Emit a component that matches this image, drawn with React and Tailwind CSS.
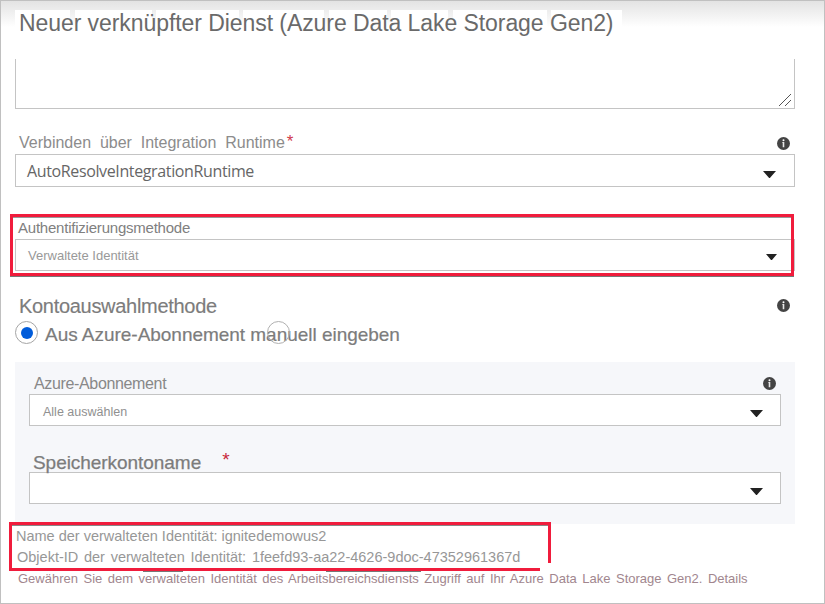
function InfoIcon() {
  return (
    <svg className="block h-[13px] w-[13px] shrink-0" viewBox="0 0 13 13">
      <circle cx="6.5" cy="6.5" r="6.5" fill="#444" />
      <circle cx="6.5" cy="3.2" r="1" fill="#fff" />
      <path d="M5.2 5h2.1v5.2H5.7V5.7h-.5Z" fill="#e8e8e8" />
    </svg>
  );
}

function Caret({ className = "h-[7px] w-[13px]" }) {
  return (
    <svg className={`block shrink-0 ${className}`} viewBox="0 0 13 7" preserveAspectRatio="none">
      <path d="M0 0h13L7.3 6.6a1 1 0 0 1-1.6 0Z" fill="#222" />
    </svg>
  );
}

function Select({ children, className = "", caret }) {
  return (
    <div className={`flex justify-between border border-[#c4c4c4] bg-white ${className}`}>
      <div className="whitespace-nowrap">{children}</div>
      {caret}
    </div>
  );
}

function HeaderPatches() {
  return (
    <div className="absolute top-[9px] left-[14px] flex h-5">
      <div className="mr-[5px] w-[55px] bg-white" />
      <div className="mr-1 w-[77px] bg-white" />
      <div className="mr-1 w-[83px] bg-white" />
      <div className="mr-[5px] w-[81px] bg-white" />
      <div className="mr-1 w-[58px] bg-white" />
      <div className="mr-[5px] w-[57px] bg-white" />
      <div className="mr-1 w-[94px] bg-white" />
      <div className="w-[71px] bg-white" />
    </div>
  );
}

export default function App() {
  return (
    <div className="flex h-[604px] w-[825px] flex-col overflow-hidden border border-[#c0c0c0] bg-white font-['Liberation_Sans',Arial,sans-serif] whitespace-nowrap text-[#808080]">
      <header className="relative h-[58px] bg-linear-to-b from-[#e3e3e3] to-white to-[26px] pt-[9px] pl-[18px]">
        <HeaderPatches />
        <h1 className="relative text-[23px] leading-[26px] tracking-[-0.07px] text-[#6a6a6a]">
          Neuer verknüpfter Dienst (Azure Data Lake Storage Gen2)
        </h1>
      </header>

      <main className="ml-[14px] flex w-[780px] flex-col">
        <div className="flex h-[50px] items-end justify-end border-x border-b border-[#c4c4c4] pr-[3px] pb-0.5">
          <svg className="block h-3 w-3" viewBox="0 0 12 12" shapeRendering="crispEdges">
            <path d="M0 12 12 0M6 12l6-6" stroke="#555" fill="none" />
          </svg>
        </div>

        <div className="flex h-[45px] justify-between pt-[21px] pr-[5px] pl-1">
          <div className="flex pt-px text-base leading-6 [word-spacing:4.4px] text-[#8c8c8c]">
            Verbinden über Integration Runtime
            <span className="-mt-px pl-[2px] text-[17px] text-[#d03a4a]">*</span>
          </div>
          <div className="pt-[7px]"><InfoIcon /></div>
        </div>
        <Select className="h-[33px] pr-[18px] pl-[11px]" caret={<Caret className="mt-4 h-[7px] w-[13px]" />}>
          <span className="block pt-1 font-['Open_Sans',sans-serif] text-base leading-6 tracking-[-0.37px] text-[#666]">
            AutoResolveIntegrationRuntime
          </span>
        </Select>

        <section className="relative mt-[27px] h-[63px] pt-[3px]">
          <div className="h-[22px] pl-[3px] text-[15px] leading-[22px] tracking-[-0.22px]">
            Authentifizierungsmethode
          </div>
          <Select className="h-8 pr-[17px] pl-3" caret={<Caret className="mt-[14px] h-[6px] w-[11px]" />}>
            <span className="block pt-[6px] text-[13px] leading-5 text-[#999]">Verwaltete Identität</span>
          </Select>
          <div className="absolute top-0 -left-[5px] h-[62px] w-[784px] border-[3px] border-[#f01c3c] shadow-[0_1px_0_#777,inset_0_1px_0_#999]" />
        </section>

        <div className="flex h-[42px] justify-between pt-[16px] pr-[5px] pl-[4px]">
          <div className="text-[20px] leading-[26px] tracking-[-0.3px] text-[#7c7c7c] [-webkit-text-stroke:0.15px_#7c7c7c]">
            Kontoauswahlmethode
          </div>
          <div className="pt-[6px]"><InfoIcon /></div>
        </div>
        <div className="relative flex h-[43px] items-start pt-[2px]">
          <span className="flex h-[23px] w-[23px] items-center justify-center rounded-full border border-[#a5a5a5]">
            <span className="h-3 w-3 rounded-full bg-[#015cda]" />
          </span>
          <span className="pt-px pl-[7px] text-[19px] leading-[26px] tracking-[-0.03px] text-[#7c7c7c] [-webkit-text-stroke:0.2px_#7c7c7c]">
            Aus Azure-Abonnement manuell eingeben
          </span>
          <span className="absolute top-[2px] left-[252px] h-[23px] w-[23px] rounded-full border border-[#b0b0b0]" />
        </div>

        <section className="h-[162px] bg-[#f6f7fa] px-[14px]">
          <div className="flex h-8 justify-between pt-[9px] pr-[5px] pl-[5px]">
            <div className="pt-px text-base leading-6 tracking-[-0.35px] text-[#888]">Azure-Abonnement</div>
            <div className="pt-[6px]"><InfoIcon /></div>
          </div>
          <Select className="h-8 pr-[17px] pl-[13px]" caret={<Caret className="mt-[15px] h-[7px] w-[13px]" />}>
            <span className="block pt-[7px] text-[12.5px] leading-5 text-[#909090]">Alle auswählen</span>
          </Select>
          <div className="flex h-[46px] pt-6 pl-1">
            <div className="relative text-[19px] leading-[26px] tracking-[-0.05px] text-[#7c7c7c] [-webkit-text-stroke:0.25px_#7c7c7c]">
              Speicherkontoname
            </div>
            <span className="-mt-[3px] pl-[21px] text-[19px] leading-[26px] text-[#c8283c]">*</span>
          </div>
          <Select className="h-8 pr-[17px]" caret={<Caret className="mt-[15px] h-[7px] w-[13px]" />} />
        </section>

        <section className="relative text-[#979797]">
          <div className="pt-px pl-px text-[14.5px] leading-[22px]">
            Name der verwalteten Identität: ignitedemowus2
          </div>
          <div className="pl-[2px] text-[14.5px] leading-[21px] [word-spacing:1.7px]">
            Objekt-ID der verwalteten Identität: 1feefd93-aa22-4626-9doc-47352961367d
          </div>
          <div className="pt-px pl-[3px] text-[13px] leading-[20px] [word-spacing:1.88px] text-[#a1868e]">
            Gewähren Sie dem verwalteten Identität des Arbeitsbereichsdiensts Zugriff auf Ihr Azure Data Lake Storage Gen2. Details
          </div>
          <div className="absolute -top-[2px] -left-[6px] h-[49px] w-[542px] border-t-[3px] border-l-[3px] border-[#f01c3c] shadow-[inset_0_1px_0_#888]">
            <div className="absolute -top-[3px] right-0 h-[41px] w-[3px] bg-[#f01c3c]" />
            <div className="absolute bottom-0 left-0 h-[3px] w-[528px] bg-[#f01c3c]" />
            <div className="absolute -bottom-px left-[131px] h-px w-[40px] bg-[#777]" />
            <div className="absolute -bottom-px left-[314px] h-px w-[95px] bg-[#777]" />
          </div>
        </section>
      </main>
    </div>
  );
}
